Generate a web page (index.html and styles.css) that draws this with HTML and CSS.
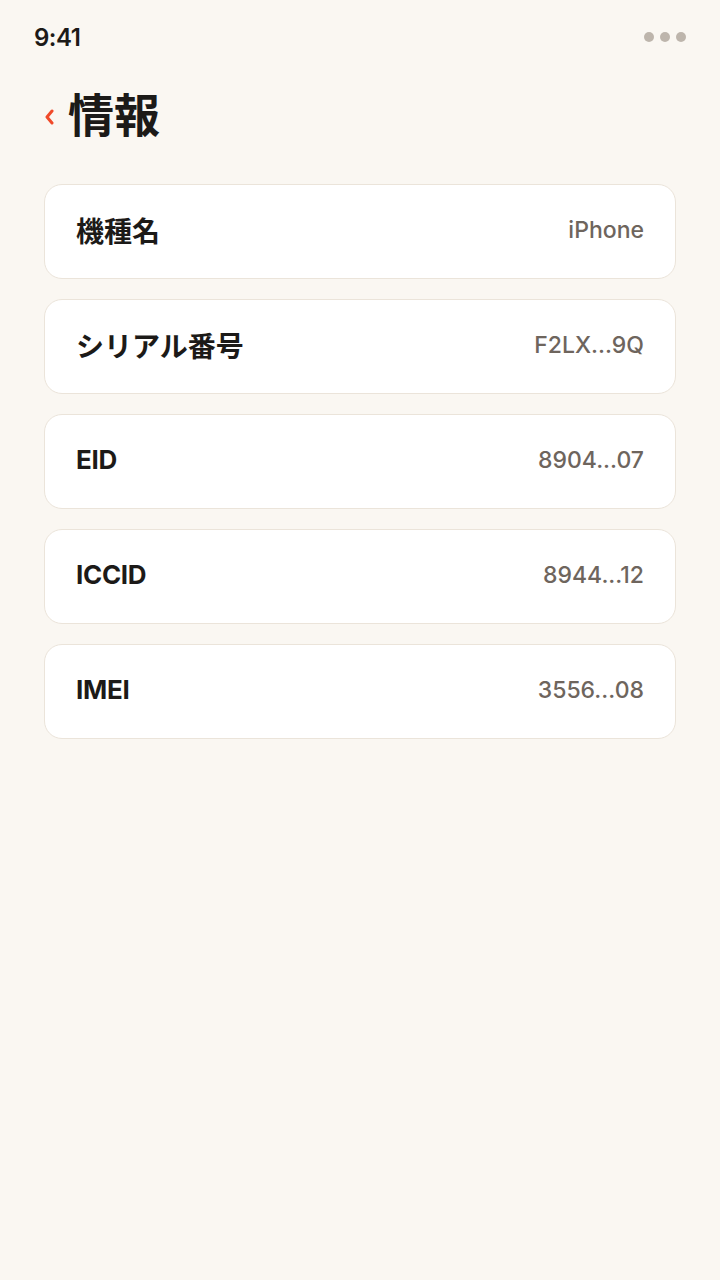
FILE: index.html
```html
<!DOCTYPE html>
<html lang="ja">

<head>
    <meta charset="UTF-8">
    <meta name="viewport" content="width=device-width, initial-scale=1.0">
    <title>情報</title>
    <link rel="stylesheet" href="styles.css">
</head>

<body>
    <div class="status-bar">
        <span class="time">9:41</span>
        <span class="dots"><i></i><i></i><i></i></span>
    </div>

    <header class="header">
        <button class="back" aria-label="戻る">
            <svg width="10" height="16" viewBox="0 0 10 16">
                <path d="M8 2 L3 8 L8 14" fill="none" stroke="#f04a2a" stroke-width="3" stroke-linecap="round" stroke-linejoin="round"/>
            </svg>
        </button>
        <h1>情報</h1>
    </header>

    <div class="info-list">
        <div class="info-row">
            <span class="label ja">機種名</span>
            <span class="value">iPhone</span>
        </div>
        <div class="info-row">
            <span class="label ja">シリアル番号</span>
            <span class="value">F2LX...9Q</span>
        </div>
        <div class="info-row">
            <span class="label">EID</span>
            <span class="value">8904...07</span>
        </div>
        <div class="info-row">
            <span class="label">ICCID</span>
            <span class="value">8944...12</span>
        </div>
        <div class="info-row">
            <span class="label">IMEI</span>
            <span class="value">3556...08</span>
        </div>
    </div>
</body>

</html>
```

FILE: styles.css
```css
body {
    margin: 0;
    min-height: 1280px;
    background-color: #faf7f2;
    color: #1c1a18;
    font-family: Inter, "Noto Sans CJK JP", sans-serif;
}

.status-bar {
    display: flex;
    align-items: center;
    justify-content: space-between;
    height: 74px;
    padding: 0 34px;
}

.status-bar .time {
    font-size: 24px;
    font-weight: 600;
    letter-spacing: -0.5px;
}

.status-bar .dots {
    display: flex;
    gap: 6px;
}

.status-bar .dots i {
    width: 10px;
    height: 10px;
    border-radius: 50%;
    background-color: #bdb5ac;
}

.header {
    display: flex;
    align-items: center;
    gap: 14px;
    padding: 0 44px;
    height: 76px;
}

.back {
    padding: 0;
    margin-top: 10px;
    border: none;
    background: none;
    display: flex;
    cursor: pointer;
}

.header h1 {
    margin: 0;
    font-size: 46px;
    font-weight: 700;
}

.info-list {
    display: flex;
    flex-direction: column;
    gap: 20px;
    padding: 34px 44px 24px;
}

.info-row {
    display: flex;
    align-items: center;
    justify-content: space-between;
    height: 93px;
    padding: 0 31px 4px;
    box-sizing: border-box;
    height: 95px;
    border: 1px solid #ebe4da;
    border-radius: 18px;
    background-color: #fff;
}

.info-row .label {
    font-size: 26px;
    font-weight: 700;
    letter-spacing: -0.3px;
}

.info-row .label.ja {
    font-size: 28px;
    letter-spacing: 0;
}

.info-row .value {
    font-size: 23px;
    font-weight: 500;
    color: #6e655d;
}
```
